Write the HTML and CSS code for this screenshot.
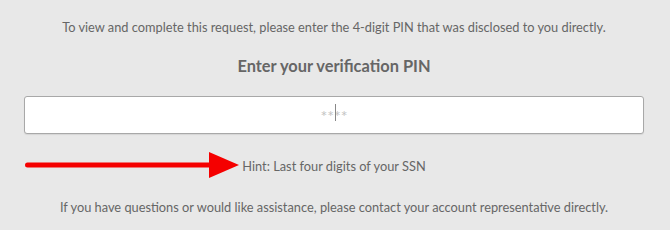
FILE: index.html
```html
<!DOCTYPE html>
<html lang="en">
<head>
    <meta charset="UTF-8">
    <meta name="viewport" content="width=device-width, initial-scale=1.0">
    <title>Verify PIN</title>
    <link rel="stylesheet" href="styles.css">
</head>
<body>
    <div class="pin-page">
        <p class="intro">To view and complete this request, please enter the 4-digit PIN that was disclosed to you directly.</p>

        <h2 class="pin-title">Enter your verification PIN</h2>

        <div class="pin-field">
            <input type="password" class="pin-input" placeholder="****" maxlength="4">
            <span class="caret"></span>
        </div>

        <div class="hint-row">
            <!-- annotation arrow pointing at the hint -->
            <svg class="hint-arrow" width="216" height="26" viewBox="0 0 216 26">
                <line x1="3.5" y1="13" x2="190" y2="13" stroke="#f50000" stroke-width="5" stroke-linecap="round"/>
                <polygon points="185,0 215,13 185,26" fill="#f50000"/>
            </svg>
            <p class="hint">Hint: Last four digits of your SSN</p>
        </div>

        <p class="help">If you have questions or would like assistance, please contact your account representative directly.</p>
    </div>
</body>
</html>
```

FILE: styles.css
```css
/* Base */
body {
    margin: 0;
    background-color: #e8e8e8;
    font-family: 'Lato', 'Open Sans', sans-serif;
    color: #666;
}

.pin-page {
    display: flex;
    flex-direction: column;
    padding: 17px 26px 0 24px;
}

p {
    margin: 0;
    font-size: 12.8px;
    line-height: 20px;
    text-align: center;
}

.pin-title {
    margin: 17px 0 0;
    font-size: 16.4px;
    line-height: 24px;
    font-weight: 700;
    text-align: center;
    color: #666;
}

/* PIN input */
.pin-field {
    position: relative;
    margin-top: 18px;
}

.pin-input {
    box-sizing: border-box;
    display: block;
    width: 100%;
    height: 38px;
    border: 1px solid #a8a8a8;
    border-radius: 3px;
    background-color: #fff;
    box-shadow: 0 1px 1px rgba(0, 0, 0, 0.08);
    font-family: inherit;
    font-size: 16px;
    text-align: center;
    outline: none;
}

.pin-input::placeholder {
    color: #c4c4c4;
}

.caret {
    position: absolute;
    left: 311px;
    top: 8px;
    width: 1px;
    height: 17px;
    background-color: #888;
}

/* Hint */
.hint-row {
    position: relative;
    margin-top: 22px;
}

.hint-arrow {
    position: absolute;
    left: 0;
    top: -4px;
}

.help {
    margin-top: 21px;
}
```
